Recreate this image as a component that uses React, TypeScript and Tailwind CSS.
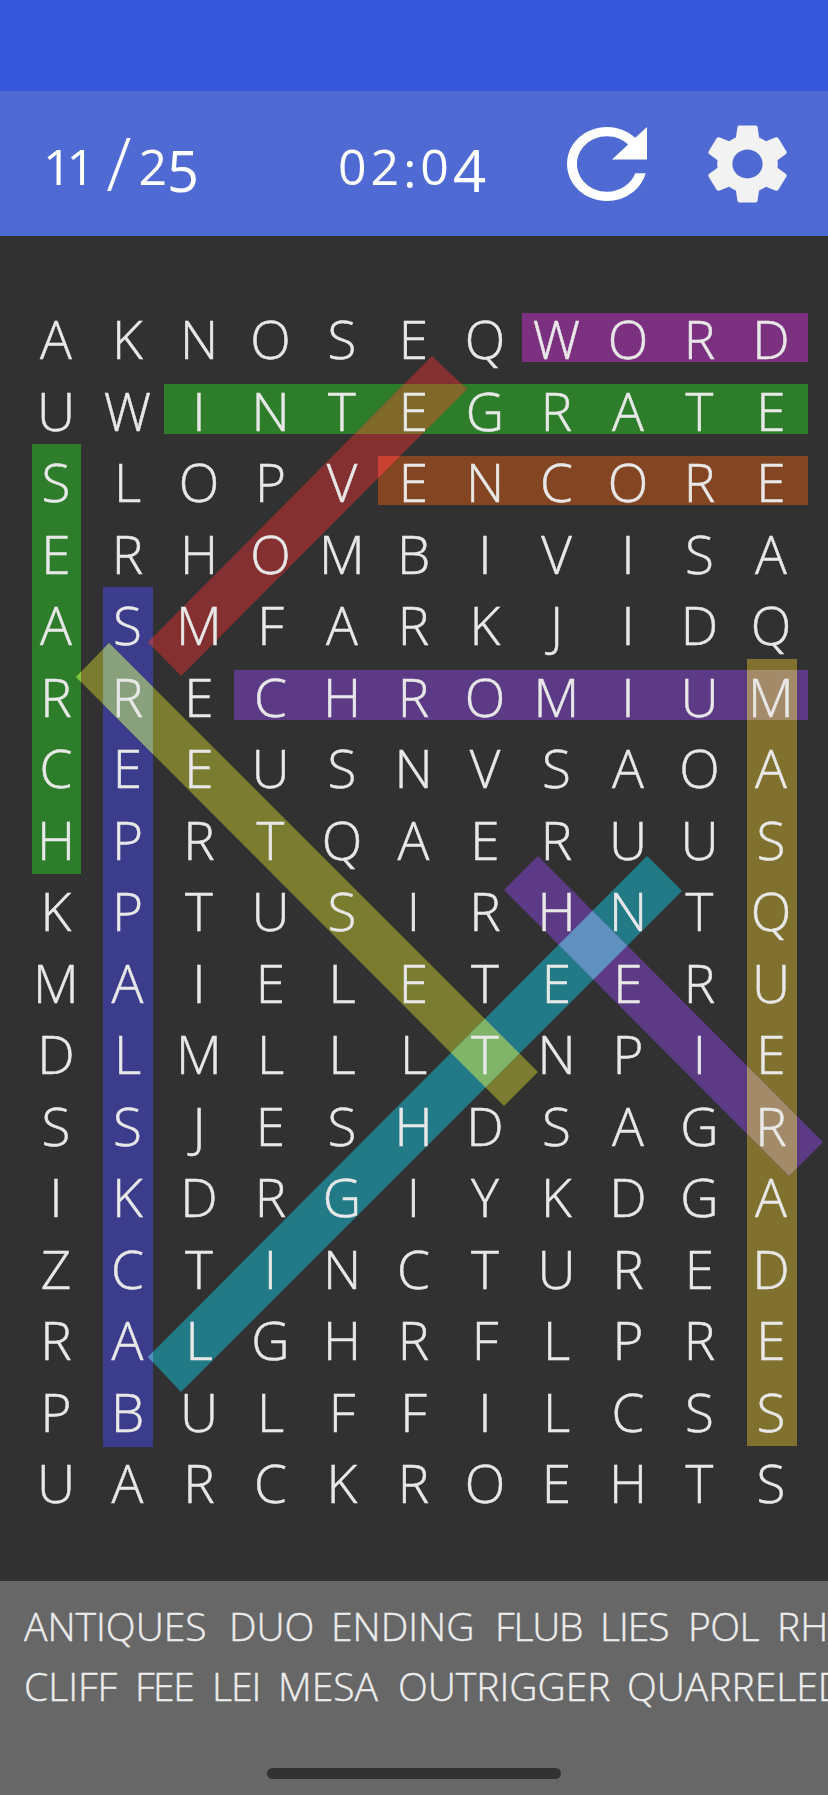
const rows = [
  "AKNOSEQWORD",
  "UWINTEGRATE",
  "SLOPVENCORE",
  "ERHOMBIVISA",
  "ASMFARKJIDQ",
  "RRECHROMIUM",
  "CEEUSNVSAOA",
  "HPRTQAERUUS",
  "KPTUSIRHNTQ",
  "MAIELETEERU",
  "DLMLLLTNPIE",
  "SSJESHDSAGR",
  "IKDRGIYKDGA",
  "ZCTINCTURED",
  "RALGHRFLPRE",
  "PBULFFILCSS",
  "UARCKROEHTS",
];

const rect = (x1: number, y1: number, x2: number, y2: number) =>
  `${x1},${y1} ${x2},${y1} ${x2},${y2} ${x1},${y2}`;

const bands: Record<string, { points: string; fill: string }> = {
  word: { points: rect(522, 313, 808, 362), fill: "#7c3180" },
  integrate: { points: rect(164, 384, 808, 434), fill: "#2e7d2a" },
  encore: { points: rect(378, 456, 808, 505), fill: "#844522" },
  chromium: { points: rect(234, 670, 808, 720), fill: "#5c3a85" },
  search: { points: rect(32, 444, 81, 874), fill: "#2e7d2a" },
  blue: { points: rect(103, 587, 153, 1447), fill: "#3c3c8c" },
  mustard: { points: rect(747, 659, 797, 1446), fill: "#80712e" },
  red: { points: "432,356 467,389 181,676 148,642", fill: "#843030" },
  olive: { points: "76,677 109,643 538,1072 504,1106", fill: "#7a7c30" },
  teal: { points: "647,856 682,891 181,1392 148,1357", fill: "#227a86" },
  violet: { points: "538,856 504,890 789,1176 823,1142", fill: "#5c3a85" },
};

const overlaps: [string, string, string][] = [
  ["red", "integrate", "#80682a"],
  ["red", "encore", "#c74030"],
  ["red", "blue", "#8c4060"],
  ["olive", "blue", "#88a07c"],
  ["olive", "search", "#7ec83a"],
  ["teal", "blue", "#5a90c0"],
  ["olive", "teal", "#80b468"],
  ["violet", "teal", "#5f90c0"],
  ["violet", "mustard", "#a38a68"],
  ["chromium", "mustard", "#a38a68"],
];

const line1 = [
  { t: "ANTIQUES", c: "" },
  { t: "DUO", c: "" },
  { t: "ENDING", c: "" },
  { t: "FLUB", c: "tracking-[-1.2px]" },
  { t: "LIES", c: "tracking-[-1px]" },
  { t: "POL", c: "tracking-[-0.5px]" },
  { t: "RHOMB", c: "" },
];
const line2 = [
  { t: "CLIFF", c: "" },
  { t: "FEE", c: "tracking-[-1.5px]" },
  { t: "LEI", c: "tracking-[-1px]" },
  { t: "MESA", c: "" },
  { t: "OUTRIGGER", c: "" },
  { t: "QUARRELED", c: "" },
];

export default function App() {
  return (
    <div className="w-[828px] h-[1795px] flex flex-col overflow-hidden bg-[#313131] font-['Open_Sans',sans-serif] font-light">
      <div className="h-[91px] shrink-0 bg-[#3558dd]" />
      <header className="h-[145px] shrink-0 bg-[#4f6bd3] flex items-center text-white">
        <div className="w-[338px] pl-[43px] pb-[14px] whitespace-nowrap flex items-baseline text-[50px] leading-none font-normal">
          <span className="tracking-[-5px]">11</span>
          <span className="text-[74px] font-light ml-[16px] inline-block translate-y-[6px]">/</span>
          <span className="ml-[7px]">2</span>
          <span className="text-[56px] inline-block translate-y-[7px]">5</span>
        </div>
        <div className="w-[229px] pb-[2px] whitespace-nowrap flex items-baseline text-[50px] leading-none font-normal tracking-[4px]">
          <span>02</span>
          <span className="inline-block translate-y-[3px]">:</span>
          <span>0</span>
          <span className="text-[58px] inline-block translate-y-[7px]">4</span>
        </div>
        <svg className="w-[80px] h-[74px]" viewBox="4 4 16 16" preserveAspectRatio="none" fill="#ffffff">
          <path d="M17.65 6.35C16.2 4.9 14.21 4 12 4c-4.42 0-7.99 3.58-7.99 8s3.57 8 7.99 8c3.73 0 6.84-2.55 7.73-6h-2.08c-.82 2.33-3.04 4-5.65 4-3.31 0-6-2.69-6-6s2.69-6 6-6c1.66 0 3.14.69 4.22 1.78L13 11h7V4l-2.35 2.35z" />
        </svg>
        <svg className="w-[79px] h-[80px] ml-[61px]" viewBox="2.6 2 18.8 20" preserveAspectRatio="none" fill="#f2f2f2">
          <path d="M19.14 12.94c.04-.3.06-.61.06-.94 0-.32-.02-.64-.07-.94l2.03-1.58c.18-.14.23-.41.12-.61l-1.92-3.32c-.12-.22-.37-.29-.59-.22l-2.39.96c-.5-.38-1.03-.7-1.62-.94l-.36-2.54c-.04-.24-.24-.41-.48-.41h-3.84c-.24 0-.43.17-.47.41l-.36 2.54c-.59.24-1.13.57-1.62.94l-2.39-.96c-.22-.08-.47 0-.59.22L2.74 8.87c-.12.21-.08.47.12.61l2.03 1.58c-.05.3-.09.63-.09.94s.02.64.07.94l-2.03 1.58c-.18.14-.23.41-.12.61l1.92 3.32c.12.22.37.29.59.22l2.39-.96c.5.38 1.03.7 1.62.94l.36 2.54c.05.24.24.41.48.41h3.84c.24 0 .44-.17.47-.41l.36-2.54c.59-.24 1.13-.56 1.62-.94l2.39.96c.22.08.47 0 .59-.22l1.92-3.32c.12-.22.07-.47-.12-.61l-2.01-1.58zM12 15.6c-1.98 0-3.6-1.62-3.6-3.6s1.62-3.6 3.6-3.6 3.6 1.62 3.6 3.6-1.62 3.6-3.6 3.6z" />
        </svg>
      </header>
      <main className="relative flex-1 pt-[67px] px-[20.25px]">
        <svg className="absolute inset-0 w-full h-full" viewBox="0 236 828 1345">
          <defs>
            {Object.entries(bands).map(([k, b]) => (
              <clipPath key={k} id={`clip-${k}`}>
                <polygon points={b.points} />
              </clipPath>
            ))}
          </defs>
          {Object.entries(bands).map(([k, b]) => (
            <polygon key={k} points={b.points} fill={b.fill} />
          ))}
          {overlaps.map(([a, b, c]) => (
            <polygon key={a + b} points={bands[a].points} clipPath={`url(#clip-${b})`} fill={c} />
          ))}
        </svg>
        <div className="relative grid grid-cols-[repeat(11,71.5px)] auto-rows-[71.5px] text-[53px] text-[#e8e8e8] [-webkit-text-stroke:0.5px_#e8e8e8]">
          {rows.flatMap((r, i) =>
            r.split("").map((ch, j) => (
              <div key={`${i}-${j}`} className="flex items-center justify-center leading-none">
                {ch}
              </div>
            ))
          )}
        </div>
      </main>
      <footer className="relative h-[214px] shrink-0 bg-[#676767] overflow-hidden pl-[24px] pt-[15px] text-[39px] text-[#ececec] [-webkit-text-stroke:0.4px_#ececec]">
        <div className="grid grid-cols-[205px_102px_164px_105px_88px_89px_max-content] h-[60px] items-center whitespace-nowrap w-[804px] overflow-hidden">
          {line1.map((w) => (
            <span key={w.t} className={w.c}>{w.t}</span>
          ))}
        </div>
        <div className="grid grid-cols-[111px_77px_66px_120px_229px_max-content] h-[60px] items-center whitespace-nowrap w-[804px] overflow-hidden">
          {line2.map((w) => (
            <span key={w.t} className={w.c}>{w.t}</span>
          ))}
        </div>
        <div className="absolute left-[267px] top-[187px] w-[294px] h-[11px] rounded-full bg-[#323232]" />
      </footer>
    </div>
  );
}
